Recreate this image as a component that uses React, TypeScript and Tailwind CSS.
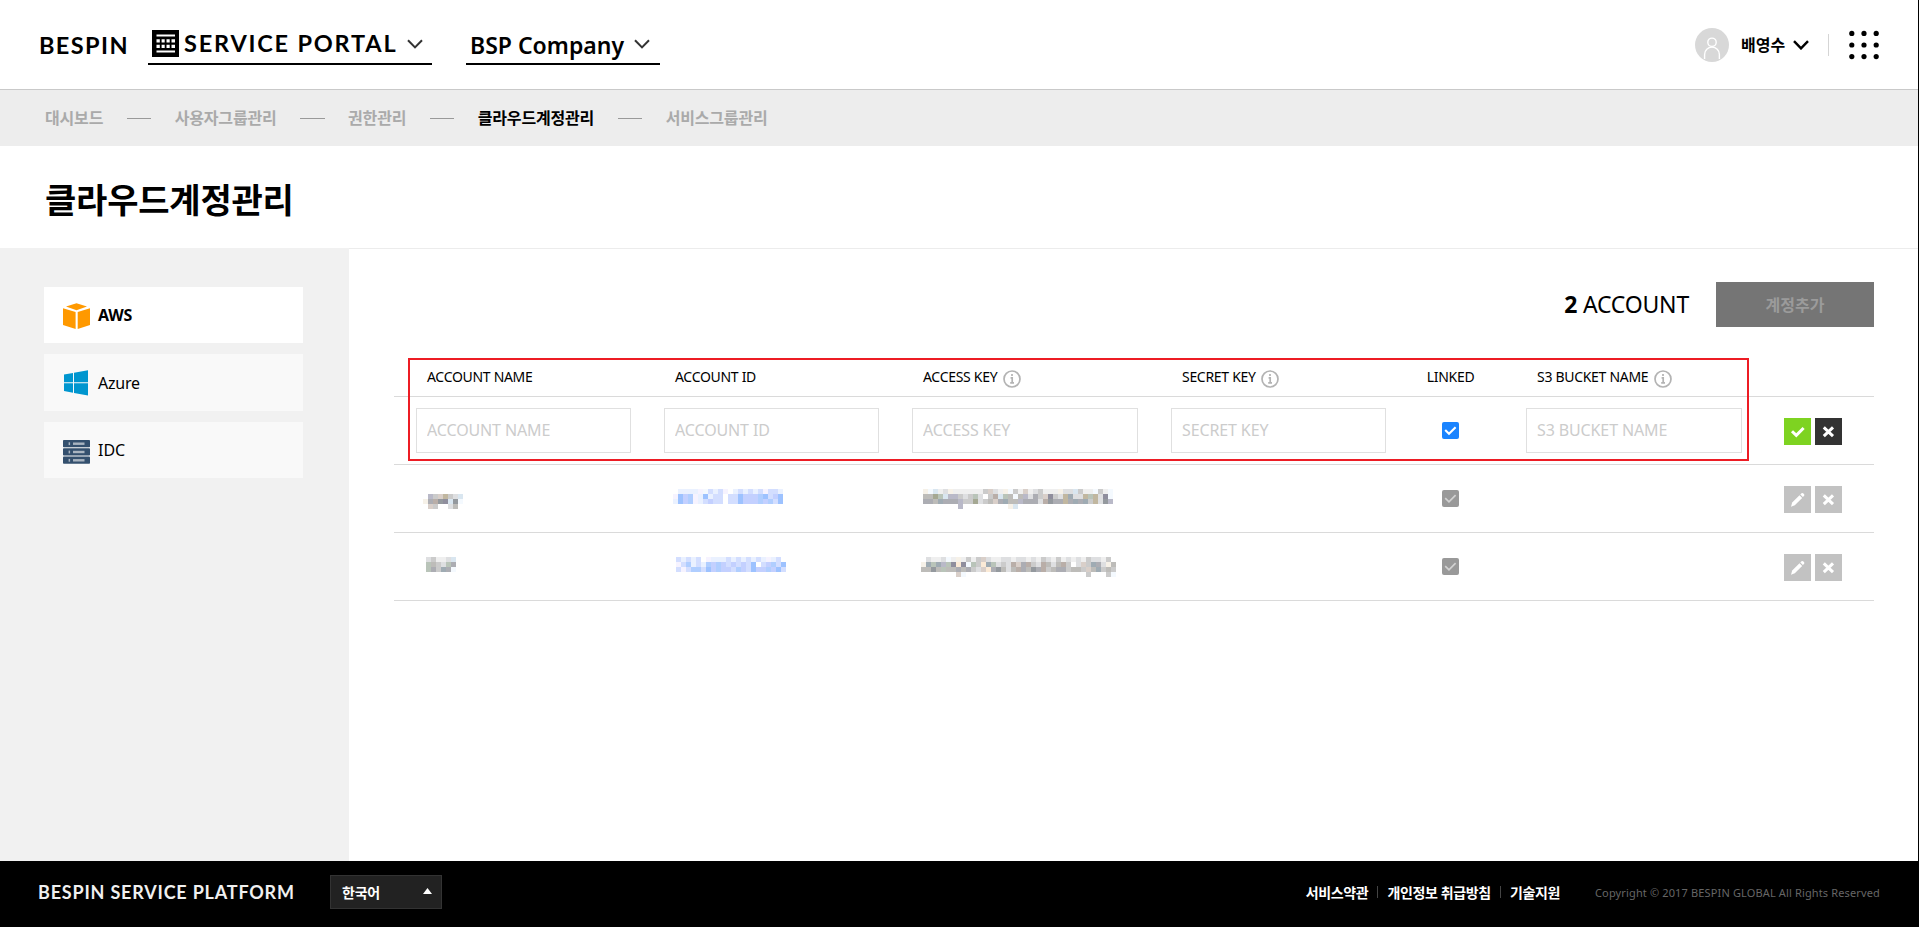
import React from "react";

const PALETTE: Record<string, string> = {
  a: "#eaf1ff", b: "#d3deff", c: "#c3d0ff", d: "#b0ceff", e: "#9dc2ff", f: "#f6f3ff",
  g: "#efefef", h: "#dedfe1", i: "#cbcbcb", j: "#bdbcb9", k: "#acadb3", l: "#94999e",
  m: "#b9aea8", n: "#d9cfc9", o: "#f6f1e8", p: "#b9b9c8", q: "#a5a893", r: "#d9e6f0",
  s: "#9fabb3", t: "#c1b7a0", u: "#8f8e9d", v: "#b9c4b9", w: "#f4f9fe", x: "#fbead6",
};

function Mosaic({ rows }: { rows: string[] }) {
  const w = rows[0].length * 5;
  const h = rows.length * 5;
  return (
    <svg width={w} height={h} shapeRendering="crispEdges" className="block">
      {rows.map((row, y) =>
        row.split("").map((ch, x) =>
          ch === "." ? null : (
            <rect key={`${x}-${y}`} x={x * 5} y={y * 5} width={5} height={5} fill={PALETTE[ch]} />
          ),
        ),
      )}
    </svg>
  );
}

const ACCOUNTS = [
  {
    name: { cls: "ml-[29px] mt-[29px]", rows: [".pintihr", "okmlurlw", ".ni..hj."] },
    id: {
      cls: "ml-[31px] mt-[24px]",
      rows: [".aaaafwbabf.abababfbba", "fecdfaeabb.bbecccdebce", "aecdfabcbb.bbecccdcdbe"],
    },
    key: {
      cls: "ml-[33px] mt-[24px]",
      rows: [
        "owrghogggggginhgowignghigggohhriggwigw",
        "jjqvrppihivh.imrvjwjphkinuihtshhtvthuw",
        "kkjskkkpiiqhijnksjjpkkkhmlkktksksithlp",
        ".......p.........or...................",
      ],
    },
  },
  {
    name: { cls: "ml-[32px] mt-[24px]", rows: ["higghr", "vjihvk", "vkiskw"] },
    id: {
      cls: "ml-[34px] mt-[24px]",
      rows: ["babab.faaababababafab.", "fbdabadcdcbebcae.bcdaea"[0] + "bdabadcdcbcbcbe.bcdbea", "bfbddbecdccbdcbeccdceb"],
    },
    key: {
      cls: "ml-[31px] mt-[24px]",
      rows: [
        ".hgghwgogiginhgghhghhghgihgighghgihhgi.",
        "osvspvuxuwvixsvhihmnkmihmjhjmi.hniskhoj",
        "jjljvjjkjkihnxkljhjmkjlkmijkkijjinjsiji",
        ".......nw........................i...iw",
      ],
    },
  },
];

const GRID = "grid grid-cols-[248px_248px_259px_248px_107px_258px_112px]";

function Chevron({ className, width = 2 }: { className?: string; width?: number }) {
  return (
    <svg viewBox="0 0 16 10" className={className} fill="none" stroke="currentColor" strokeWidth={width}>
      <path d="M1 1.2 8 8.4 15 1.2" />
    </svg>
  );
}

function Info() {
  return (
    <svg viewBox="0 0 18 18" className="mt-[3px] size-[18px] shrink-0" fill="none">
      <circle cx="9" cy="9" r="8" stroke="#b3b3b3" strokeWidth="1.7" />
      <path d="M9 4v2M7.6 7.8h1.6v5M7.2 12.8h3.8" stroke="#b3b3b3" strokeWidth="1.7" />
    </svg>
  );
}

function Check({ on }: { on?: boolean }) {
  return (
    <svg viewBox="0 0 17 17" className="size-[17px]">
      <rect width="17" height="17" rx="2" fill={on ? "#1a84ff" : "#999999"} />
      <path d="M3.2 8.1 7 11.8 13.6 5.2" fill="none" stroke={on ? "#fff" : "#d2d2d2"} strokeWidth={on ? 2.1 : 1.7} />
    </svg>
  );
}

function Cross({ className }: { className: string }) {
  return (
    <button className={className}>
      <svg viewBox="0 0 27 27" className="size-[27px]">
        <path d="M8.8 9.3 18 18.2M18 9.3 8.8 18.2" stroke="#fff" strokeWidth="3" />
      </svg>
    </button>
  );
}

function Field({ label, className }: { label: string; className: string }) {
  return (
    <div className="pt-[11px] pl-[22px]">
      <input
        placeholder={label}
        className={`${className} block h-[45px] border border-[#e0e0e0] bg-white px-[10px] pb-[2px] text-[16px] tracking-[-0.12px] outline-none placeholder:text-[#cccccc]`}
      />
    </div>
  );
}

function Header() {
  return (
    <header className="flex h-[90px] items-start border-b border-[#c9c9c9] pl-[39px] pr-[39px]">
      <div className="mt-[31px] w-[109px] font-[Lato] text-[23.5px] leading-[28px] font-bold tracking-[1.4px]">BESPIN</div>
      <div className="flex h-[65px] w-[284px] items-start border-b-2 border-black pl-[4px]">
        <svg viewBox="0 0 27 27" className="mt-[30px] h-[27px] w-[27px] shrink-0">
          <path d="M0 0h27v27H0z" fill="#000" />
          <path d="M4.5 5.4h18.5M4.5 21.4h18.5" stroke="#fff" strokeWidth="2" />
          <path d="M4.5 10.9h18.5M4.5 16.3h18.5" stroke="#fff" strokeWidth="3.3" />
          <path d="M8.7 9v9.5M13.6 9v9.5M18.6 9v9.5" stroke="#000" strokeWidth="1.8" />
        </svg>
        <div className="mt-[29px] ml-[5px] w-[223px] font-[Lato] text-[23.5px] leading-[28px] font-bold tracking-[1.8px] whitespace-nowrap">
          SERVICE PORTAL
        </div>
        <Chevron className="mt-[39px] h-[10px] w-[16px] shrink-0 text-[#333]" />
      </div>
      <div className="ml-[34px] flex h-[65px] w-[194px] items-start border-b-2 border-black pl-[4px]">
        <div className="mt-[30px] w-[164px] text-[23px] leading-[30px] font-semibold whitespace-nowrap">BSP Company</div>
        <Chevron className="mt-[39px] h-[10px] w-[16px] shrink-0 text-[#333]" />
      </div>
      <div className="ml-auto flex h-[89px] items-center">
        <svg viewBox="0 0 34 34" className="size-[34px]" fill="none">
          <circle cx="17" cy="17" r="17" fill="#d8d8d8" />
          <circle cx="17" cy="14.3" r="4.2" stroke="#fff" strokeWidth="1.4" />
          <path d="M9.6 31v-4.5a7.4 7.4 0 0 1 14.8 0V31" stroke="#fff" strokeWidth="1.4" />
        </svg>
        <span className="ml-[12px] w-[52px] text-[16px] font-bold">배영수</span>
        <Chevron className="h-[10px] w-[16px] text-black" width={2.4} />
        <span className="ml-[19px] h-[22px] w-px bg-[#d5d5d5]" />
        <svg viewBox="0 0 30 30" className="ml-[20px] size-[30px]">
          {[3.4, 15, 26.6].map((y) => [2.8, 15, 27.2].map((x) => <circle key={`${x}-${y}`} cx={x} cy={y} r="2.6" />))}
        </svg>
      </div>
    </header>
  );
}

const NAV = ["대시보드", "사용자그룹관리", "권한관리", "클라우드계정관리", "서비스그룹관리"];

export default function App() {
  return (
    <div className="flex h-[927px] w-full flex-col overflow-hidden border-r border-black bg-white font-['Noto_Sans','Noto_Sans_CJK_KR',sans-serif] text-black">
      <Header />
      <nav className="flex h-[56px] items-center bg-[#ededed] pl-[45px] text-[16px] font-bold tracking-[-0.17px]">
        {NAV.map((item, i) => (
          <React.Fragment key={item}>
            {i > 0 && <span className="mx-[23.5px] h-px w-[24.5px] bg-[#999]" />}
            <span className={i === 3 ? "text-black" : "text-[#aaaaaa]"}>{item}</span>
          </React.Fragment>
        ))}
      </nav>
      <div className="flex h-[102px] items-center pt-[5px] pl-[45px]">
        <h1 className="text-[34px] leading-[50px] font-bold tracking-[-0.2px]">클라우드계정관리</h1>
      </div>
      <div className="flex flex-1">
        <aside className="flex w-[349px] flex-col gap-[11px] bg-[#f1f1f1] pt-[39px] pl-[44px]">
          <div className="flex h-[56px] w-[259px] items-center bg-white pl-[19px] text-[16px] font-bold">
            <svg viewBox="0 0 27 26" className="mt-px h-[26px] w-[27px]" fill="#ff9900">
              <path d="M13.5.2 24 3.6 13.5 7.2 3 3.6z" />
              <path d="M0 5.2 12.6 8.9V26L0 21.9z" />
              <path d="M27 5.2 14.7 8.9V26L27 21.9z" />
            </svg>
            <span className="ml-[8px] tracking-[-0.2px]">AWS</span>
          </div>
          <div className="flex h-[57px] w-[259px] items-center bg-[#f9f9f9] pl-[20px] text-[16px]">
            <svg viewBox="0 0 24 26" className="mt-px h-[26px] w-[24px]" fill="#0096cf">
              <path d="M0 4.6 9 3v9.3H0z" />
              <path d="M10 2.8 24 .2v12.1H10z" />
              <path d="M0 13.3h9v9.4l-9-1.6z" />
              <path d="M10 13.3h14v12.2l-14-2.6z" />
            </svg>
            <span className="ml-[10px] tracking-[-0.2px]">Azure</span>
          </div>
          <div className="flex h-[56px] w-[259px] items-center bg-[#f9f9f9] pl-[19px] text-[16px]">
            <svg viewBox="0 0 27 24" className="mt-[4px] h-[24px] w-[27px]">
              {[0, 8.3, 16.6].map((y) => (
                <g key={y}>
                  <rect y={y} width="27" height="7.2" rx="0.8" fill="#34506e" />
                  <rect x="10" y={y + 2.5} width="11.5" height="2.4" fill="#a9b4c0" />
                  <rect x="5.6" y={y + 2.3} width="1.5" height="2.8" fill="#a9b4c0" />
                </g>
              ))}
            </svg>
            <span className="ml-[8px]">IDC</span>
          </div>
        </aside>
        <main className="flex-1 border-t border-[#ececec] pl-[45px]">
          <div className="flex h-[111px] items-start justify-end pr-[44px] pt-[33px]">
            <div className="mt-[6px] mr-[27px] text-[23px] leading-[32px] tracking-[-0.2px]">
              <b>2</b> ACCOUNT
            </div>
            <button className="h-[45px] w-[158px] bg-[#757575] text-[16px] font-bold text-[#9b9b9b]">계정추가</button>
          </div>
          <section className="relative w-[1480px]">
            <div className={`${GRID} h-[37px] border-b border-[#dadada] text-[14px] leading-[20px] tracking-[-0.3px]`}>
              <div className="pt-[7px] pl-[33px]">ACCOUNT NAME</div>
              <div className="pt-[7px] pl-[33px]">ACCOUNT ID</div>
              <div className="flex items-start gap-[6px] pt-[7px] pl-[33px]">ACCESS KEY <Info /></div>
              <div className="flex items-start gap-[5px] pt-[7px] pl-[33px]">SECRET KEY <Info /></div>
              <div className="pt-[7px] text-center">LINKED</div>
              <div className="flex items-start gap-[6px] pt-[7px] pl-[33px]">S3 BUCKET NAME <Info /></div>
              <div />
            </div>
            <div className={`${GRID} h-[68px] border-b border-[#dadada]`}>
              <Field label="ACCOUNT NAME" className="w-[215px]" />
              <Field label="ACCOUNT ID" className="w-[215px]" />
              <Field label="ACCESS KEY" className="w-[226px]" />
              <Field label="SECRET KEY" className="w-[215px]" />
              <div className="flex justify-center pt-[25px]"><Check on /></div>
              <Field label="S3 BUCKET NAME" className="w-[216px]" />
              <div className="flex items-start gap-[4px] pt-[21px] pl-[22px]">
                <button className="size-[27px] bg-[#7ed321]">
                  <svg viewBox="0 0 27 27" className="size-[27px]">
                    <path d="M8 13.2 12.3 17.4 19.6 10" fill="none" stroke="#fff" strokeWidth="3" />
                  </svg>
                </button>
                <Cross className="size-[27px] bg-[#333333]" />
              </div>
            </div>
            {ACCOUNTS.map((acc, i) => (
              <div key={i} className={`${GRID} h-[68px] border-b border-[#dadada]`}>
                <div className="flow-root"><div className={acc.name.cls}><Mosaic rows={acc.name.rows} /></div></div>
                <div className="flow-root"><div className={acc.id.cls}><Mosaic rows={acc.id.rows} /></div></div>
                <div className="flow-root"><div className={acc.key.cls}><Mosaic rows={acc.key.rows} /></div></div>
                <div />
                <div className="flex justify-center pt-[25px]"><Check /></div>
                <div />
                <div className="flex items-start gap-[4px] pt-[21px] pl-[22px]">
                  <button className="size-[27px] bg-[#c2c2c2]">
                    <svg viewBox="0 0 27 27" className="size-[27px]" fill="#fff">
                      <path d="M7 20.8l1.2-4.3 7.3-7.3 2.7 2.7-7.4 7.4z" />
                      <path d="M16.3 8.4l1.2-1.2q.8-.6 1.6.1l1 1q.6.8 0 1.5L18.9 11z" />
                    </svg>
                  </button>
                  <Cross className="size-[27px] bg-[#c2c2c2]" />
                </div>
              </div>
            ))}
            <div className="pointer-events-none absolute top-[-2px] left-[14px] h-[103px] w-[1341px] border-2 border-[#ed1c24]" />
          </section>
        </main>
      </div>
      <footer className="flex h-[66px] items-center bg-black pb-[4px] pl-[38px] pr-[38px] text-white">
        <div className="w-[292px] font-[Lato] text-[18px] font-bold tracking-[0.8px] whitespace-nowrap text-[#f0f0f0]">BESPIN SERVICE PLATFORM</div>
        <div className="flex h-[34px] w-[112px] items-center justify-between border border-[#333] bg-[#222] pr-[9px] pl-[11px] text-[14px] font-bold tracking-[-0.2px]">
          한국어
          <svg viewBox="0 0 9 6" className="mb-[2px] h-[6px] w-[9px]" fill="#fff"><path d="M4.5 0 9 6H0z" /></svg>
        </div>
        <div className="ml-auto flex items-center text-[14px] font-bold tracking-[-0.35px]">
          <span>서비스약관</span>
          <span className="mx-[9px] h-[12px] w-px bg-[#444]" />
          <span>개인정보 취급방침</span>
          <span className="mx-[9px] h-[12px] w-px bg-[#444]" />
          <span>기술지원</span>
        </div>
        <div className="mt-[2px] ml-[35px] text-[11px] tracking-[0.14px] text-[#666]">Copyright © 2017 BESPIN GLOBAL All Rights Reserved</div>
      </footer>
    </div>
  );
}
